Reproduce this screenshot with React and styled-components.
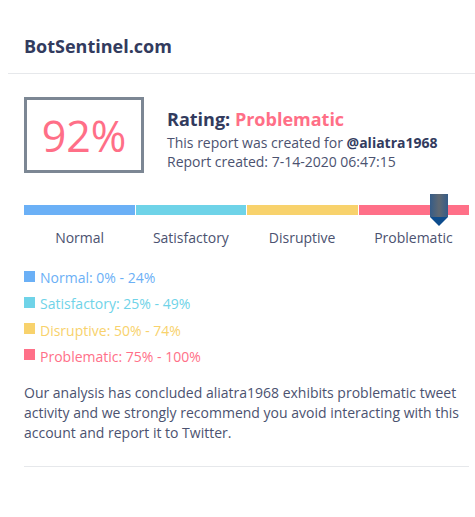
import React from 'react';
import styled, { createGlobalStyle } from 'styled-components';

const GlobalStyle = createGlobalStyle`
    body {
        margin: 0;
        overflow: hidden;
        background: #ffffff;
        font-family: "Open Sans", "Liberation Sans", sans-serif;
        color: #3e4566;
    }
`;

const Card = styled.div`
    margin-left: 8px;
    width: 476px;
    box-sizing: border-box;
`;

const Header = styled.div`
    padding: 34px 16px 15px;
    border-bottom: 1px solid #e6e8eb;
    font-size: 18px;
    font-weight: 700;
    line-height: 24px;
    color: #323b5e;
`;

const Body = styled.div`
    padding: 23px 16px 0;
`;

const Summary = styled.div`
    display: flex;
    align-items: flex-start;
    gap: 23px;
`;

const ScoreBox = styled.div`
    width: 120px;
    height: 76px;
    box-sizing: border-box;
    border: 3px solid #7c8794;
    display: flex;
    align-items: center;
    justify-content: center;
    font-size: 43px;
    color: #ff6f87;
`;

const Details = styled.div`
    display: flex;
    flex-direction: column;
    padding-top: 10px;
    font-size: 14px;
    line-height: 19px;
    color: #4b5270;
`;

const Rating = styled.div`
    margin-bottom: 2px;
    font-size: 18px;
    font-weight: 700;
    line-height: 24px;
    color: #323b5e;

    span {
        color: #ff6f87;
    }
`;

const Handle = styled.b`
    color: #323b5e;
`;

const Scale = styled.div`
    position: relative;
    width: 445px;
    margin-top: 32px;
`;

const Bar = styled.div`
    display: flex;
    gap: 1px;
`;

const Segment = styled.div`
    flex: 1;
    height: 10px;
    background: ${p => p.color};
`;

const Marker = styled.div`
    position: absolute;
    top: -11px;
    width: 18px;
    height: 23px;
    background: linear-gradient(90deg, #355c88, #5f6872 50%, #355c88);

    &::after {
        content: '';
        position: absolute;
        left: 0;
        top: 23px;
        border-left: 9px solid transparent;
        border-right: 9px solid transparent;
        border-top: 9px solid #0d4c8d;
    }
`;

const Labels = styled.div`
    display: flex;
    margin-top: 13px;
`;

const Label = styled.div`
    flex: 1;
    text-align: center;
    font-size: 14px;
    line-height: 20px;
    color: #4b5270;
`;

const Legend = styled.div`
    display: flex;
    flex-direction: column;
    gap: 6.3px;
    margin-top: 20px;
`;

const LegendItem = styled.div`
    display: flex;
    align-items: center;
    gap: 5px;
    font-size: 14px;
    line-height: 20px;
    color: ${p => p.color};

    &::before {
        content: '';
        width: 11px;
        height: 11px;
        margin-top: -4px;
        background: ${p => p.color};
    }
`;

const Note = styled.p`
    margin: 16px 0 0;
    padding-bottom: 23px;
    width: 445px;
    border-bottom: 1px solid #e6e8eb;
    font-size: 14px;
    line-height: 20px;
    color: #4b5270;
`;

const levels = [
    { name: 'Normal', range: '0% - 24%', color: '#6bb0f6' },
    { name: 'Satisfactory', range: '25% - 49%', color: '#6fd3e8' },
    { name: 'Disruptive', range: '50% - 74%', color: '#f8d26c' },
    { name: 'Problematic', range: '75% - 100%', color: '#ff7088' },
];

const score = 92;

const App = () => {
    return (
        <Card>
            <GlobalStyle />
            <Header>BotSentinel.com</Header>
            <Body>
                <Summary>
                    <ScoreBox>{score}%</ScoreBox>
                    <Details>
                        <Rating>Rating: <span>Problematic</span></Rating>
                        <div>This report was created for <Handle>@aliatra1968</Handle></div>
                        <div>Report created: 7-14-2020 06:47:15</div>
                    </Details>
                </Summary>
                <Scale>
                    <Bar>
                        {levels.map(l => <Segment key={l.name} color={l.color} />)}
                    </Bar>
                    <Marker style={{ left: `calc(${score}% - 3px)` }} />
                    <Labels>
                        {levels.map(l => <Label key={l.name}>{l.name}</Label>)}
                    </Labels>
                </Scale>
                <Legend>
                    {levels.map(l => (
                        <LegendItem key={l.name} color={l.color}>{l.name}: {l.range}</LegendItem>
                    ))}
                </Legend>
                <Note>
                    Our analysis has concluded aliatra1968 exhibits problematic tweet activity and we strongly recommend you avoid interacting with this account and report it to Twitter.
                </Note>
            </Body>
        </Card>
    );
};

export default App;
